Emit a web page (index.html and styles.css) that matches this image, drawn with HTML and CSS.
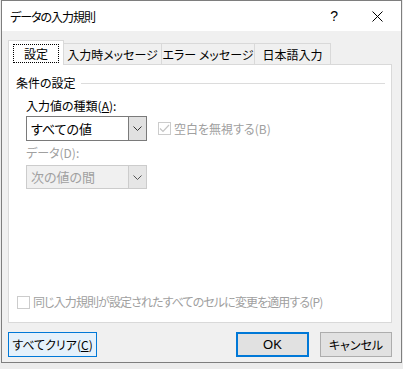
FILE: index.html
```html
<!DOCTYPE html>
<html lang="ja">
<head>
    <meta charset="UTF-8">
    <title>データの入力規則</title>
    <link rel="stylesheet" href="styles.css">
</head>
<body>

    <div class="window">
        <div class="titlebar">
            <span class="title">データの入力規則</span>
            <span class="help">?</span>
            <svg class="close" width="11" height="11" viewBox="0 0 11 11">
                <path d="M0.5 0.5 L10.5 10.5 M10.5 0.5 L0.5 10.5" stroke="#000" stroke-width="1" fill="none"/>
            </svg>
        </div>

        <div class="content">
            <div class="tabs">
                <div class="tab active"><span class="focus">設定</span></div>
                <div class="tab t2">入力時メッセージ</div>
                <div class="tab t3">エラー メッセージ</div>
                <div class="tab t4">日本語入力</div>
            </div>

            <div class="panel">
                <div class="group">条件の設定</div>

                <div class="field-label">入力値の種類(<u>A</u>):</div>
                <div class="row">
                    <div class="combo">
                        <span class="combo-text">すべての値</span>
                        <span class="combo-btn">
                            <svg width="9" height="5" viewBox="0 0 9 5"><path d="M0.5 0.5 L4.5 4.5 L8.5 0.5" stroke="#333" fill="none"/></svg>
                        </span>
                    </div>
                    <label class="check disabled">
                        <span class="box">
                            <svg width="11" height="9" viewBox="0 0 11 9"><path d="M1 4.5 L4 7.5 L10 1" stroke="#c4c4c4" stroke-width="1.2" fill="none"/></svg>
                        </span>
                        空白を無視する(B)
                    </label>
                </div>

                <div class="field-label disabled">データ(D):</div>
                <div class="combo off">
                    <span class="combo-text">次の値の間</span>
                    <span class="combo-btn">
                        <svg width="9" height="5" viewBox="0 0 9 5"><path d="M0.5 0.5 L4.5 4.5 L8.5 0.5" stroke="#555" fill="none"/></svg>
                    </span>
                </div>

                <label class="check disabled apply">
                    <span class="box"></span>
                    同じ入力規則が設定されたすべてのセルに変更を適用する(P)
                </label>
            </div>

            <div class="buttons">
                <button class="btn clear">すべてクリア(<u>C</u>)</button>
                <div class="right">
                    <button class="btn ok">OK</button>
                    <button class="btn">キャンセル</button>
                </div>
            </div>
        </div>
    </div>

</body>
</html>
```

FILE: styles.css
```css
body {
    margin: 0;
    background-color: #ececec;
    font-family: "Noto Sans CJK JP", "Noto Sans", sans-serif;
    font-size: 12px;
    font-feature-settings: "palt";
    color: #000;
}
.window {
    margin-left: 1px;
    width: 401px;
    height: 363px;
    box-sizing: border-box;
    border: 1px solid #7e7e7e;
    background: #f0f0f0;
    display: flex;
    flex-direction: column;
}
.titlebar {
    flex-shrink: 0;
    height: 30px;
    background: white;
    display: flex;
    align-items: center;
    padding-left: 8px;
}
.title {
    flex: 1;
    font-size: 12px;
    letter-spacing: -1px;
}
.help {
    font-family: "Liberation Sans", sans-serif;
    font-size: 14px;
    margin-right: 34px;
}
.close {
    margin-right: 18px;
}
.content {
    flex: 1;
    display: flex;
    flex-direction: column;
    padding: 9px 9px 6px 6px;
}
.tabs {
    flex-shrink: 0;
    display: flex;
    align-items: flex-end;
    height: 24px;
}
.tab {
    height: 21px;
    box-sizing: border-box;
    border: 1px solid #d9d9d9;
    border-bottom: none;
    border-left: none;
    background: #f0f0f0;
    text-align: center;
    line-height: 21px;
}
.tab.active {
    width: 56px;
    height: 25px;
    border-left: 1px solid #d9d9d9;
    background: white;
    margin-bottom: -1px;
    position: relative;
    z-index: 1;
    padding-top: 2px;
}
.focus {
    display: inline-block;
    width: 44px;
    height: 17px;
    line-height: 17px;
    border: 1px dotted #000;
}
.t2 { width: 98px; }
.t3 { width: 93px; }
.t4 { width: 76px; }
.panel {
    flex-shrink: 0;
    height: 259px;
    box-sizing: border-box;
    background: white;
    border: 1px solid #d9d9d9;
    display: flex;
    flex-direction: column;
    padding: 10px 6px 12px 7px;
}
.group {
    display: flex;
    align-items: center;
    line-height: 16px;
}
.group::after {
    content: "";
    flex: 1;
    height: 1px;
    background: #dcdcdc;
    margin-left: 5px;
}
.field-label {
    margin: 7px 0 0 10px;
    line-height: 16px;
}
.field-label.disabled {
    color: #a0a0a0;
    margin-top: 4px;
}
.row {
    display: flex;
    align-items: center;
    margin-top: 2px;
}
.combo {
    margin-left: 10px;
    width: 121px;
    height: 25px;
    box-sizing: border-box;
    border: 1px solid #7a7a7a;
    display: flex;
    background: white;
}
.combo.off {
    height: 24px;
    margin-top: 4px;
    border-color: #cccccc;
    background: #f0f0f0;
    color: #a0a0a0;
}
.combo-text {
    flex: 1;
    padding-left: 4px;
    line-height: 23px;
    font-size: 13px;
}
.combo.off .combo-text {
    line-height: 22px;
}
.combo-btn {
    width: 17px;
    border-left: 1px solid #7a7a7a;
    background: #e1e1e1;
    display: flex;
    align-items: center;
    justify-content: center;
}
.combo.off .combo-btn {
    border-left-color: #cccccc;
    background: #e6e6e6;
}
.check {
    display: flex;
    align-items: center;
    gap: 3px;
    line-height: 16px;
}
.check.disabled {
    color: #a0a0a0;
}
.row .check {
    margin-left: 11px;
    font-size: 12px;
}
.box {
    width: 13px;
    height: 13px;
    box-sizing: border-box;
    border: 1px solid #cccccc;
    background: white;
    display: flex;
    align-items: center;
    justify-content: center;
}
.apply {
    margin-top: auto;
    margin-left: 1px;
    font-size: 12px;
    letter-spacing: -0.9px;
}
.buttons {
    display: flex;
    justify-content: space-between;
    margin-top: 9px;
}
.right {
    display: flex;
    gap: 11px;
}
.btn {
    height: 25px;
    width: 72px;
    box-sizing: border-box;
    border: 1px solid #adadad;
    background: #e1e1e1;
    font-family: "Noto Sans CJK JP", "Noto Sans", sans-serif;
    font-size: 12px;
    font-feature-settings: "palt";
    color: #000;
    padding: 0;
}
.btn.clear {
    width: 89px;
    border-color: #0078d7;
    background: #e5f1fb;
}
.btn.ok {
    width: 73px;
    border: 2px solid #0078d7;
    font-family: "Liberation Sans", sans-serif;
    font-size: 13px;
}
```
